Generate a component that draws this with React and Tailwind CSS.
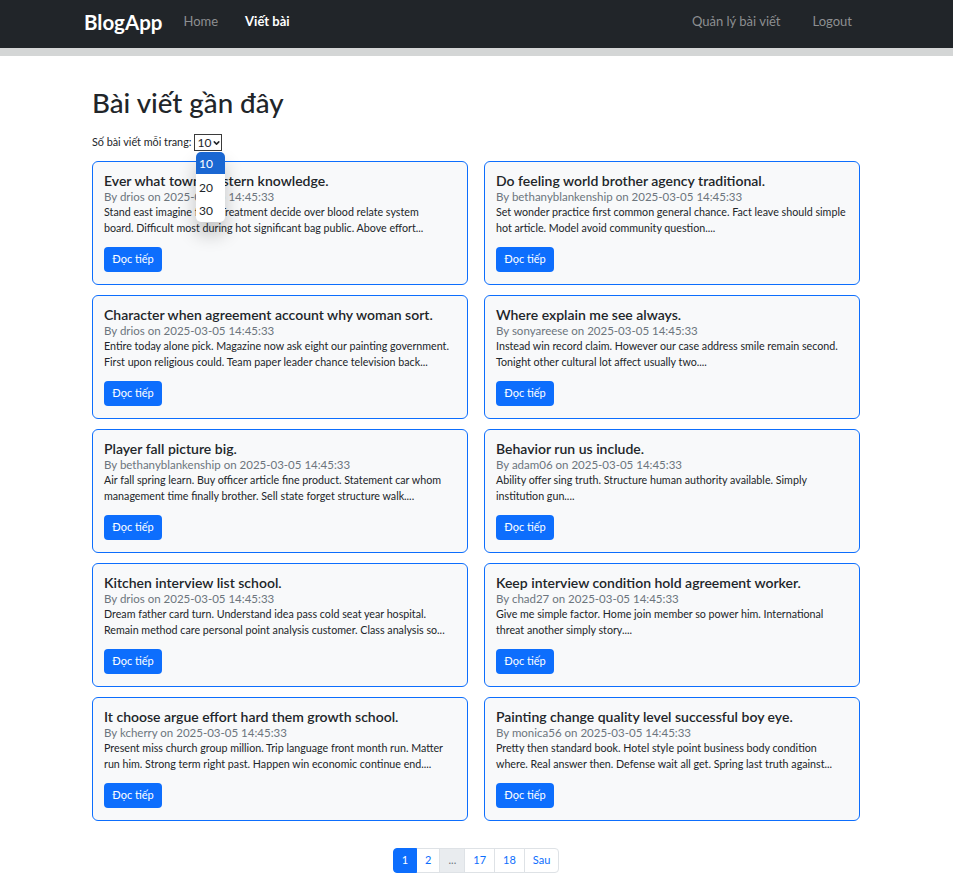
import { ChevronDown } from "lucide-react";

const posts = [
  {
    title: "Ever what town western knowledge.",
    author: "drios",
    lines: [
      "Stand east imagine field. Treatment decide over blood relate system",
      "board. Difficult most during hot significant bag public. Above effort...",
    ],
  },
  {
    title: "Do feeling world brother agency traditional.",
    author: "bethanyblankenship",
    lines: [
      "Set wonder practice first common general chance. Fact leave should simple",
      "hot article. Model avoid community question....",
    ],
  },
  {
    title: "Character when agreement account why woman sort.",
    author: "drios",
    lines: [
      "Entire today alone pick. Magazine now ask eight our painting government.",
      "First upon religious could. Team paper leader chance television back...",
    ],
  },
  {
    title: "Where explain me see always.",
    author: "sonyareese",
    lines: [
      "Instead win record claim. However our case address smile remain second.",
      "Tonight other cultural lot affect usually two....",
    ],
  },
  {
    title: "Player fall picture big.",
    author: "bethanyblankenship",
    lines: [
      "Air fall spring learn. Buy officer article fine product. Statement car whom",
      "management time finally brother. Sell state forget structure walk....",
    ],
  },
  {
    title: "Behavior run us include.",
    author: "adam06",
    lines: [
      "Ability offer sing truth. Structure human authority available. Simply",
      "institution gun....",
    ],
  },
  {
    title: "Kitchen interview list school.",
    author: "drios",
    lines: [
      "Dream father card turn. Understand idea pass cold seat year hospital.",
      "Remain method care personal point analysis customer. Class analysis so...",
    ],
  },
  {
    title: "Keep interview condition hold agreement worker.",
    author: "chad27",
    lines: [
      "Give me simple factor. Home join member so power him. International",
      "threat another simply story....",
    ],
  },
  {
    title: "It choose argue effort hard them growth school.",
    author: "kcherry",
    lines: [
      "Present miss church group million. Trip language front month run. Matter",
      "run him. Strong term right past. Happen win economic continue end....",
    ],
  },
  {
    title: "Painting change quality level successful boy eye.",
    author: "monica56",
    lines: [
      "Pretty then standard book. Hotel style point business body condition",
      "where. Real answer then. Defense wait all get. Spring last truth against...",
    ],
  },
];

const pages = [
  { label: "1", active: true },
  { label: "2" },
  { label: "...", disabled: true },
  { label: "17" },
  { label: "18" },
  { label: "Sau" },
];

const PostCard = ({ post }) => (
  <div className="rounded-[6px] border border-[#0d6efd] bg-[#f8f9fa] px-[11px] pt-[10px] pb-[12px]">
    <h5 className="text-[14px] leading-[17px] font-semibold text-[#212529]">
      {post.title}
    </h5>
    <div className="text-[11.5px] leading-[15px] text-[#6c757d]">
      By {post.author} on 2025-03-05 14:45:33
    </div>
    <p className="text-[10.7px] leading-[16px] whitespace-nowrap text-[#212529]">
      {post.lines[0]}
      <br />
      {post.lines[1]}
    </p>
    <button className="mt-[11px] h-[25px] w-[58px] rounded-[4px] bg-[#0d6efd] text-[11px] text-white">
      Đọc tiếp
    </button>
  </div>
);

export default function App() {
  return (
    <div className="min-h-screen bg-white font-['Lato',sans-serif] text-[#212529]">
      {/* Navbar */}
      <nav className="h-[48px] bg-[#212529]">
        <div className="flex h-full items-center pr-[101px] pb-[4px] pl-[84px]">
          <a className="text-[20.5px] font-bold text-white">BlogApp</a>
          <a className="ml-[21px] text-[13px] text-[#8d8f91]">Home</a>
          <a className="ml-[27px] text-[13px] font-bold text-white">Viết bài</a>
          <div className="ml-auto flex items-center gap-[32px]">
            <a className="text-[13px] text-[#8d8f91]">Quản lý bài viết</a>
            <a className="text-[13px] text-[#8d8f91]">Logout</a>
          </div>
        </div>
      </nav>
      <div className="h-[8px] bg-[#d4d6d6]" />

      <main className="ml-[92px] w-[768px] pt-[29px] pb-[22px]">
        <h2 className="text-[27.7px] leading-[36px] font-medium text-[#212529]">
          Bài viết gần đây
        </h2>

        <div className="relative mt-[13px] flex h-[17px] items-center text-[10.8px]">
          <span>Số bài viết mỗi trang:</span>
          <div className="ml-[3px] flex h-[17px] w-[28px] items-center border border-[#3b3b3b] pl-[2px] text-[12px]">
            <span>10</span>
            <ChevronDown className="ml-[1px] size-[10px]" strokeWidth={4} />
          </div>
          {/* open select list */}
          <div className="absolute top-[18px] left-[104px] z-10 w-[29px] overflow-hidden rounded-[5px] bg-white pb-[4px] text-[12px] shadow-[0_12px_18px_rgba(0,0,0,0.22)]">
            <div className="h-[22px] bg-[#1a67d2] pt-[3px] pl-[3px] text-white">10</div>
            <div className="h-[24px] pt-[5px] pl-[3px]">20</div>
            <div className="h-[20px] pt-[4px] pl-[3px]">30</div>
          </div>
        </div>

        <div className="mt-[10px] grid grid-cols-2 gap-x-[16px] gap-y-[10px]">
          {posts.map((post) => (
            <PostCard key={post.title} post={post} />
          ))}
        </div>

        <div className="mt-[27px] flex justify-center">
          <div className="flex h-[25px] text-[11px]">
            {pages.map((p, i) => (
              <a
                key={p.label}
                className={`flex items-center border px-[8px] ${
                  i === 0 ? "rounded-l-[4px]" : "-ml-px"
                } ${i === pages.length - 1 ? "rounded-r-[4px]" : ""} ${
                  p.active
                    ? "z-10 border-[#0d6efd] bg-[#0d6efd] text-white"
                    : p.disabled
                      ? "border-[#dee2e6] bg-[#e9ecef] text-[#6c757d]"
                      : "border-[#dee2e6] bg-white text-[#0d6efd]"
                }`}
              >
                {p.label}
              </a>
            ))}
          </div>
        </div>
      </main>
    </div>
  );
}
